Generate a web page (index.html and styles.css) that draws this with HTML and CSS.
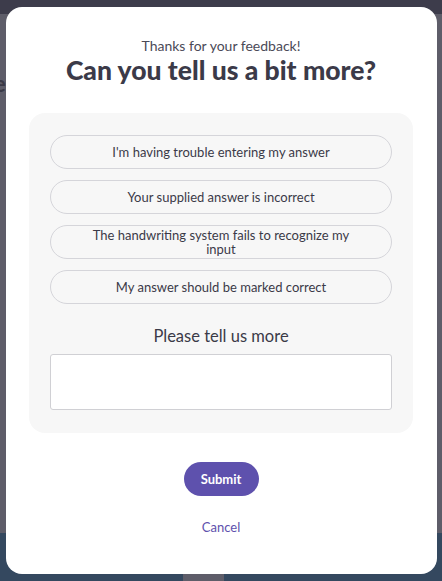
FILE: index.html
```html
<!DOCTYPE html>
<html>
<head>
<meta charset="utf-8">
<title>feedback</title>
<link rel="stylesheet" href="styles.css">
</head>
<body>
  <div class="page">
    <div class="topbar"></div>
    <div class="main"><span class="peek">e</span></div>
    <div class="footer"><div class="tab"></div></div>
  </div>

  <div class="modal">
    <p class="subtitle">Thanks for your feedback!</p>
    <h1 class="title">Can you tell us a bit more?</h1>

    <div class="panel">
      <button class="option">I'm having trouble entering my answer</button>
      <button class="option">Your supplied answer is incorrect</button>
      <button class="option">The handwriting system fails to recognize my<br>input</button>
      <button class="option">My answer should be marked correct</button>

      <label class="more-label" for="more">Please tell us more</label>
      <textarea id="more" class="more"></textarea>
    </div>

    <button class="submit">Submit</button>
    <a class="cancel" href="#">Cancel</a>
  </div>
</body>
</html>
```

FILE: styles.css
```css
html, body {
  margin: 0;
  height: 100%;
  font-family: "Lato", "Noto Sans", sans-serif;
  overflow: hidden;
}

.page {
  display: flex;
  flex-direction: column;
  height: 100%;
}

.topbar {
  height: 14px;
  background: #3d3c4b;
}

.main {
  height: 519px;
  background: #5e5d69;
  position: relative;
}

.main .peek {
  position: absolute;
  left: -6px;
  top: 56px;
  font-size: 22px;
  font-weight: 700;
  color: #3a3946;
}

.footer {
  flex: 1;
  background: #34485f;
  display: flex;
  align-items: flex-end;
}

.tab {
  margin-left: 183px;
  width: 41px;
  height: 7px;
  background: #5e5d69;
}

.modal {
  position: absolute;
  left: 6px;
  top: 7px;
  width: 431px;
  height: 567px;
  box-sizing: border-box;
  background: #fff;
  border-radius: 16px;
  padding: 30px 24px 0 23px;
  display: flex;
  flex-direction: column;
  align-items: center;
  color: #3b3a48;
}

.subtitle {
  margin: 0;
  font-size: 14px;
  line-height: 17px;
  color: #4b4a57;
}

.title {
  margin: 0;
  font-size: 26.5px;
  line-height: 32px;
  font-weight: 900;
  color: #3b3a48;
}

.panel {
  margin-top: 27px;
  align-self: stretch;
  background: #f7f7f7;
  border-radius: 16px;
  padding: 22px 21px 23px;
  display: flex;
  flex-direction: column;
  gap: 11px;
}

.option {
  height: 34px;
  border: 1px solid #d5d5da;
  border-radius: 17px;
  background: #f7f7f7;
  font-family: inherit;
  font-size: 13px;
  line-height: 14px;
  color: #3b3a48;
  padding: 0 40px;
}

.more-label {
  margin-top: 12px;
  text-align: center;
  font-size: 16.5px;
  line-height: 18px;
  color: #3b3a48;
}

.more {
  margin-top: -2px;
  height: 56px;
  box-sizing: border-box;
  border: 1px solid #d0d0d4;
  border-radius: 3px;
  background: #fff;
  resize: none;
}

.submit {
  margin-top: 29px;
  width: 75px;
  height: 34px;
  border: none;
  border-radius: 17px;
  background: #5e51ad;
  color: #fff;
  font-family: inherit;
  font-size: 13px;
  font-weight: 700;
}

.cancel {
  margin-top: 24px;
  font-size: 13px;
  line-height: 14px;
  color: #5e51ad;
  text-decoration: none;
}
```
